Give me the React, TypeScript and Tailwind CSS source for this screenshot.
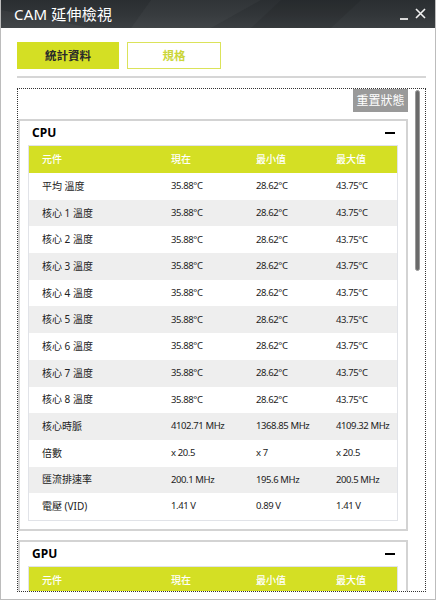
import React from "react";

const font = { fontFamily: '"Noto Sans", "Noto Sans CJK TC", sans-serif' };

type Row = [string, string, string, string];

const cpuRows: Row[] = [
  ["平均 溫度", "35.88°C", "28.62°C", "43.75°C"],
  ["核心 1 溫度", "35.88°C", "28.62°C", "43.75°C"],
  ["核心 2 溫度", "35.88°C", "28.62°C", "43.75°C"],
  ["核心 3 溫度", "35.88°C", "28.62°C", "43.75°C"],
  ["核心 4 溫度", "35.88°C", "28.62°C", "43.75°C"],
  ["核心 5 溫度", "35.88°C", "28.62°C", "43.75°C"],
  ["核心 6 溫度", "35.88°C", "28.62°C", "43.75°C"],
  ["核心 7 溫度", "35.88°C", "28.62°C", "43.75°C"],
  ["核心 8 溫度", "35.88°C", "28.62°C", "43.75°C"],
  ["核心時脈", "4102.71 MHz", "1368.85 MHz", "4109.32 MHz"],
  ["倍數", "x 20.5", "x 7", "x 20.5"],
  ["匯流排速率", "200.1 MHz", "195.6 MHz", "200.5 MHz"],
  ["電壓 (VID)", "1.41 V", "0.89 V", "1.41 V"],
];

function Header() {
  return (
    <div className="grid grid-cols-[129px_85px_80px_1fr] pl-[13px] h-[27px] items-center bg-[#d4df24] text-white text-[10px] font-medium">
      <span>元件</span>
      <span>現在</span>
      <span>最小值</span>
      <span>最大值</span>
    </div>
  );
}

function Panel({ title, rows }: { title: string; rows: Row[] }) {
  return (
    <div className="border-2 border-[#d3d3d3] bg-white px-[8px] pb-[8px]">
      <div className="h-[24px] flex items-center justify-between pl-[4px] pr-[2px]">
        <span className="text-[12px] font-bold text-black">{title}</span>
        <span className="block w-[10px] h-[2px] bg-black mr-[1px]" />
      </div>
      <div className="border border-[#e1e3e8]">
        <Header />
        {rows.map((r, i) => (
          <div
            key={i}
            className={
              "grid grid-cols-[129px_85px_80px_1fr] pl-[13px] h-[26.7px] items-center text-[#222] " +
              (i % 2 === 1 ? "bg-[#eeeeee]" : "bg-white")
            }
          >
            <span className="text-[10px]">{r[0]}</span>
            <span className="text-[9.5px] tracking-[-0.4px]">{r[1]}</span>
            <span className="text-[9.5px] tracking-[-0.4px]">{r[2]}</span>
            <span className="text-[9.5px] tracking-[-0.4px]">{r[3]}</span>
          </div>
        ))}
      </div>
    </div>
  );
}

export default function App() {
  return (
    <div
      style={font}
      className="w-[436px] h-[600px] bg-white border-x border-b border-[#bcbcbc] flex flex-col overflow-hidden"
    >
      <div className="h-[28px] shrink-0 relative bg-[linear-gradient(180deg,#2a2e31_0%,#33373a_60%,#3b3f42_100%)] flex items-center pl-[13px] pr-[9px]">
        <svg className="absolute inset-0" width="436" height="28" viewBox="0 0 436 28">
          <polygon points="150,0 260,0 210,28 130,28" fill="#ffffff" opacity="0.03" />
          <polygon points="280,0 360,0 330,28 250,28" fill="#000000" opacity="0.08" />
          <polygon points="0,10 90,28 0,28" fill="#ffffff" opacity="0.04" />
        </svg>
        <span className="relative text-white text-[15px] leading-none tracking-[0.2px]">CAM 延伸檢視</span>
        <div className="relative ml-auto flex items-center gap-[7px]">
          <span className="block w-[8px] h-[2px] bg-[#d8d8d8] mt-[9px]" />
          <svg width="11" height="11" viewBox="0 0 11 11" className="mb-[1px]">
            <path d="M1 1 L10 10 M10 1 L1 10" stroke="#f2f2f2" strokeWidth="1.6" />
          </svg>
        </div>
      </div>

      <div className="flex-1 flex flex-col pl-[16px] pr-[9px]">
        <div className="flex gap-[8px] mt-[14px]">
          <div className="w-[102px] h-[27px] bg-[#d4df24] flex items-center justify-center text-[11.5px] font-bold text-[#2a2a2a]">
            統計資料
          </div>
          <div className="w-[94px] h-[27px] border-[1.5px] border-[#dbe35a] bg-white flex items-center justify-center text-[11.5px] font-bold text-[#cbd63a]">
            規格
          </div>
        </div>
        <div className="mt-[7px] h-[2px] bg-[#d6d6d6]" />
        <div className="mt-[10px] h-[504px] border border-dotted border-[#333] flex overflow-hidden">
          <div className="w-[390px] shrink-0 flex flex-col">
            <div className="flex justify-end">
              <div className="h-[23px] w-[55px] bg-[#9a9a9a] text-white text-[12px] flex items-center justify-center">
                重置狀態
              </div>
            </div>
            <div className="mt-[7px]">
              <Panel title="CPU" rows={cpuRows} />
            </div>
            <div className="mt-[9px]">
              <Panel title="GPU" rows={cpuRows} />
            </div>
          </div>
          <div className="flex-1 flex justify-center pt-[1px]">
            <div className="ml-[1px] w-[5px] h-[181px] rounded-full bg-[#6a6a6a] border border-[#9a9a9a]" />
          </div>
        </div>
      </div>
    </div>
  );
}
